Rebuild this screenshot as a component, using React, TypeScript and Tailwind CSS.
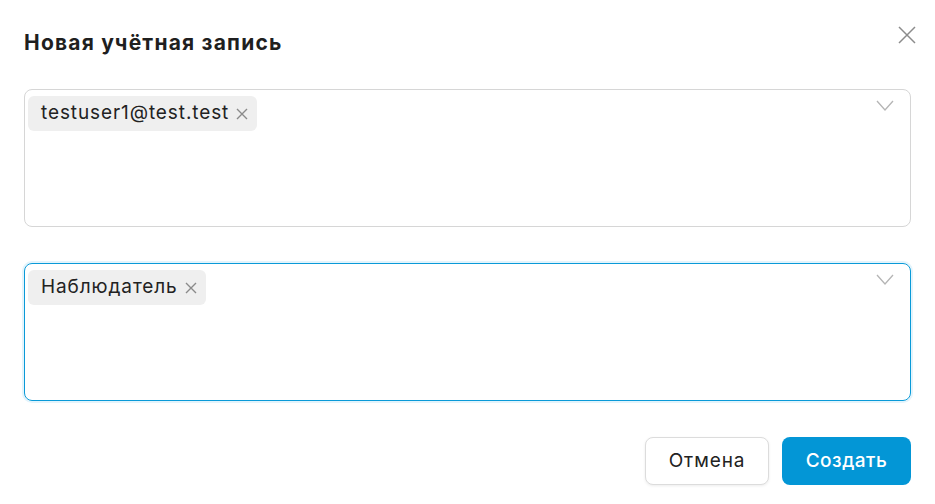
import React from 'react';

const Chevron: React.FC = () => (
  <svg width="18" height="11" viewBox="0 0 18 11" fill="none" className="shrink-0">
    <path d="M1 1l8 9 8-9" stroke="#b5b5b5" strokeWidth="1.3" />
  </svg>
);

const SmallX: React.FC = () => (
  <svg width="12" height="12" viewBox="0 0 12 12" fill="none">
    <path d="M1 1l10 10M11 1L1 11" stroke="#8a8a8a" strokeWidth="1.4" />
  </svg>
);

const Chip: React.FC<{ label: string }> = ({ label }) => (
  <div className="flex items-center gap-[7px] h-[35px] pl-[13px] pr-[9px] rounded-[6px] bg-[#efefef] text-[19px] tracking-[0.9px] text-[#222]">
    <span>{label}</span>
    <SmallX />
  </div>
);

const SelectBox: React.FC<{ label: string; focused?: boolean }> = ({ label, focused }) => (
  <div
    className={
      focused
        ? 'flex items-start justify-between h-[138px] rounded-[8px] border border-[#0a9ad8] shadow-[0_0_0_2px_#e3f4fc] pl-[3px] pt-[6px] pr-[16px]'
        : 'flex items-start justify-between h-[138px] rounded-[8px] border border-[#d6d6d6] pl-[3px] pt-[6px] pr-[16px]'
    }
  >
    <Chip label={label} />
    <div className="pt-[4px]">
      <Chevron />
    </div>
  </div>
);

export default function App() {
  return (
    <div className="w-[935px] h-[504px] bg-white px-[24px] pt-[28px] font-['Inter',sans-serif] text-[#222]">
      <div className="flex items-start justify-between">
        <h1 className="text-[21px] leading-[30px] font-bold tracking-[1.2px] text-[#1f1f1f]">Новая учётная запись</h1>
        <button className="mt-[-2px] mr-[-5px]">
          <svg width="18" height="18" viewBox="0 0 18 18" fill="none">
            <path d="M1 1l16 16M17 1L1 17" stroke="#8c8c8c" strokeWidth="1.5" />
          </svg>
        </button>
      </div>
      <div className="mt-[31px] flex flex-col gap-[36px]">
        <SelectBox label="testuser1@test.test" />
        <SelectBox label="Наблюдатель" focused />
      </div>
      <div className="mt-[36px] flex justify-end gap-[13px]">
        <button className="w-[124px] h-[48px] rounded-[8px] border border-[#dcdcdc] bg-white text-[19px] tracking-[0.9px] text-[#222] shadow-[0_1px_3px_rgba(0,0,0,0.08)]">
          Отмена
        </button>
        <button className="w-[129px] h-[48px] rounded-[8px] bg-[#0396d6] text-[19px] tracking-[0.5px] text-white font-medium">
          Создать
        </button>
      </div>
    </div>
  );
}
